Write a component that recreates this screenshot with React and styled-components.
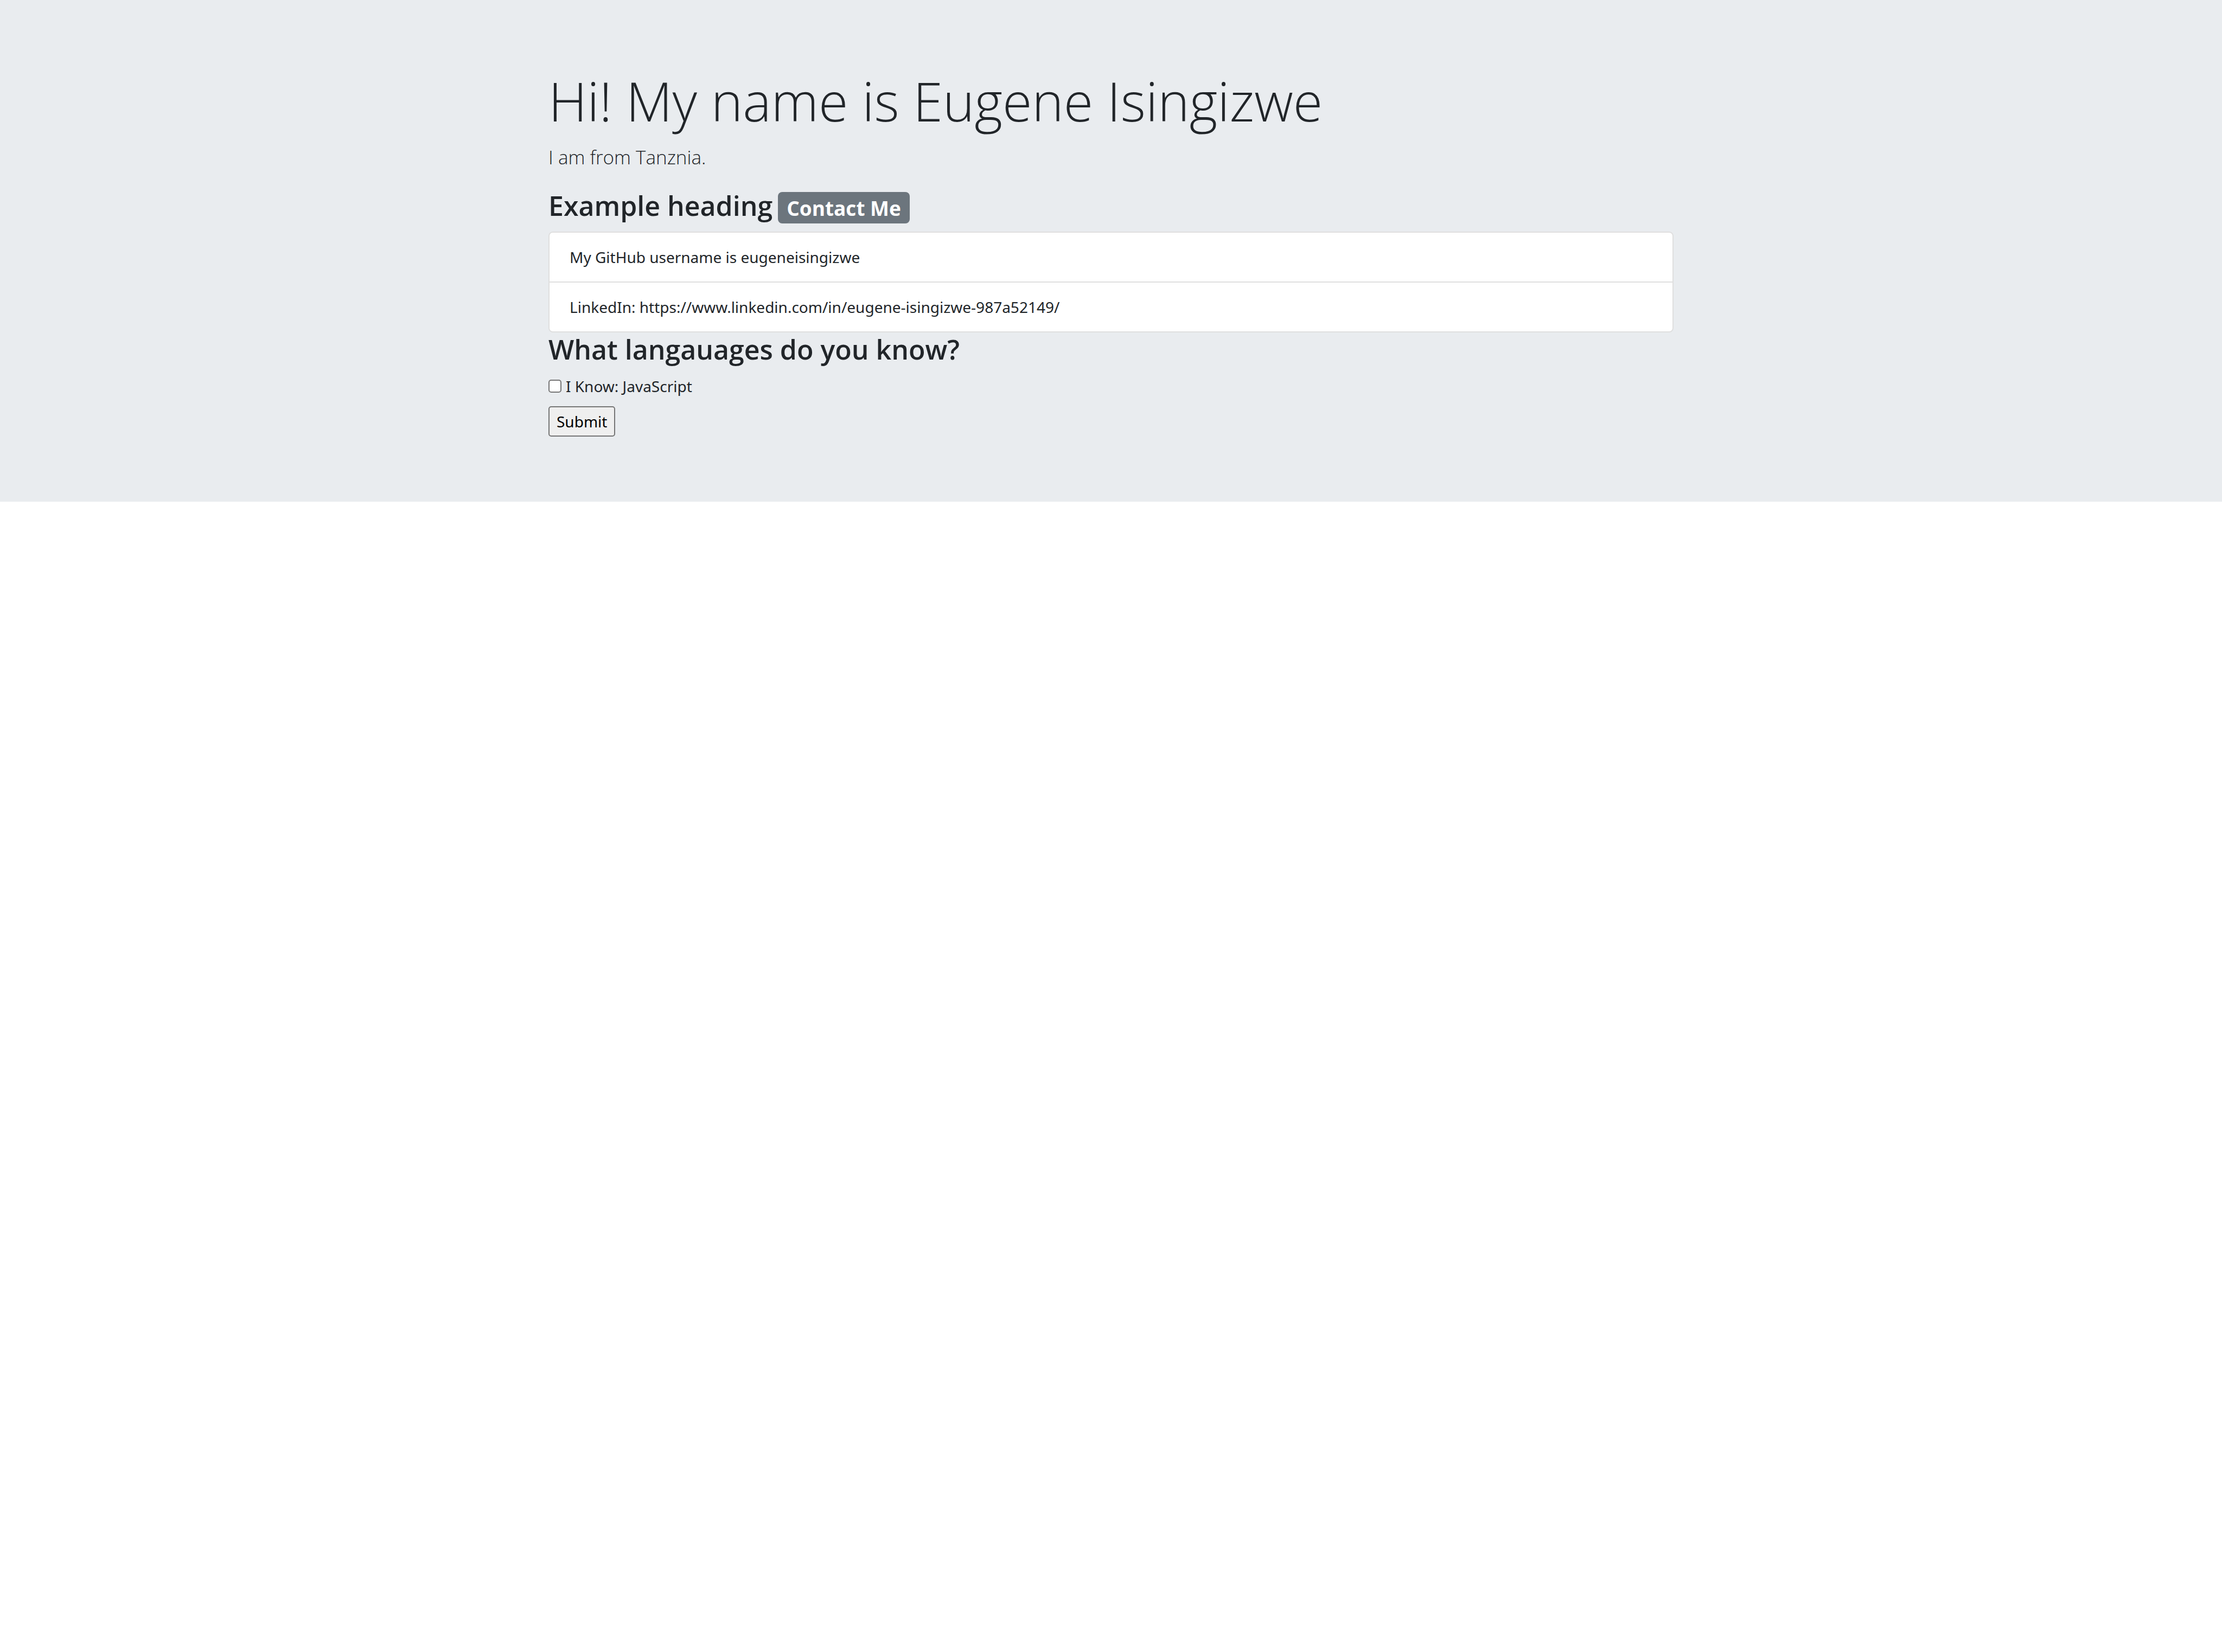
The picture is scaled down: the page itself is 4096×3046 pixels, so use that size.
import React, { useState } from "react";
import styled, { createGlobalStyle } from "styled-components";

const GlobalStyle = createGlobalStyle`
  *, *::before, *::after { box-sizing: border-box; }
  body {
    margin: 0;
    background: #fff;
    color: #212529;
    font-family: "Noto Sans", "Open Sans", sans-serif;
    font-size: 28px;
    line-height: 46px;
  }
`;

const Jumbotron = styled.main`
  padding: 120px 60px;
  background: #e9ecef;
`;

const Container = styled.div`
  max-width: 2074px;
  margin: 0 auto;
`;

const Title = styled.h1`
  margin: 0 0 10px;
  font-family: "Open Sans", sans-serif;
  font-size: 99px;
  font-weight: 300;
  line-height: 132px;
`;

const Lead = styled.p`
  margin: 0 0 30px;
  font-family: "Open Sans", sans-serif;
  font-size: 35px;
  font-weight: 300;
  line-height: 56px;
`;

const Heading = styled.h3`
  display: flex;
  align-items: baseline;
  gap: 10px;
  margin: 0 0 15px;
  font-family: "Open Sans", sans-serif;
  font-size: 50px;
  font-weight: 600;
  line-height: 62px;
`;

const Badge = styled.span`
  padding: 12px 16px 10px;
  border-radius: 8px;
  background: #6c757d;
  color: #fff;
  font-size: 37px;
  font-weight: 700;
  line-height: 36px;
`;

const List = styled.ul`
  margin: 0;
  padding: 0;
  list-style: none;
  overflow: hidden;
  border: 2px solid #dfdfdf;
  border-radius: 8px;
  background: #fff;
`;

const Item = styled.li`
  padding: 22px 37px;

  & + & {
    border-top: 2px solid #dfdfdf;
  }
`;

const CheckLabel = styled.label`
  display: flex;
  align-items: center;
  gap: 8px;
  width: fit-content;
  margin: 0 0 15px;
  line-height: 44px;
`;

const Checkbox = styled.input`
  appearance: none;
  width: 24px;
  height: 24px;
  margin: 0;
  border: 2px solid #767676;
  border-radius: 5px;
  background: #fff;

  &:checked {
    background: #0075ff;
    border-color: #0075ff;
  }
`;

const Submit = styled.button`
  display: block;
  padding: 3px 13px;
  border: 2px solid #767676;
  border-radius: 5px;
  background: #efefef;
  color: #000;
  font: inherit;
  line-height: 46px;
`;

export default function App() {
  const [knows, setKnows] = useState(false);

  return (
    <>
      <GlobalStyle />
      <Jumbotron>
        <Container>
          <Title>Hi! My name is Eugene Isingizwe</Title>
          <Lead>I am from Tanznia.</Lead>
          <Heading>
            Example heading <Badge>Contact Me</Badge>
          </Heading>
          <List>
            <Item>My GitHub username is eugeneisingizwe</Item>
            <Item>LinkedIn: https://www.linkedin.com/in/eugene-isingizwe-987a52149/</Item>
          </List>
          <form onSubmit={(event) => event.preventDefault()}>
            <Heading>What langauages do you know?</Heading>
            <CheckLabel htmlFor="javascript">
              <Checkbox
                id="javascript"
                type="checkbox"
                checked={knows}
                onChange={(event) => setKnows(event.target.checked)}
              />
              I Know: JavaScript
            </CheckLabel>
            <Submit type="submit">Submit</Submit>
          </form>
        </Container>
      </Jumbotron>
    </>
  );
}
